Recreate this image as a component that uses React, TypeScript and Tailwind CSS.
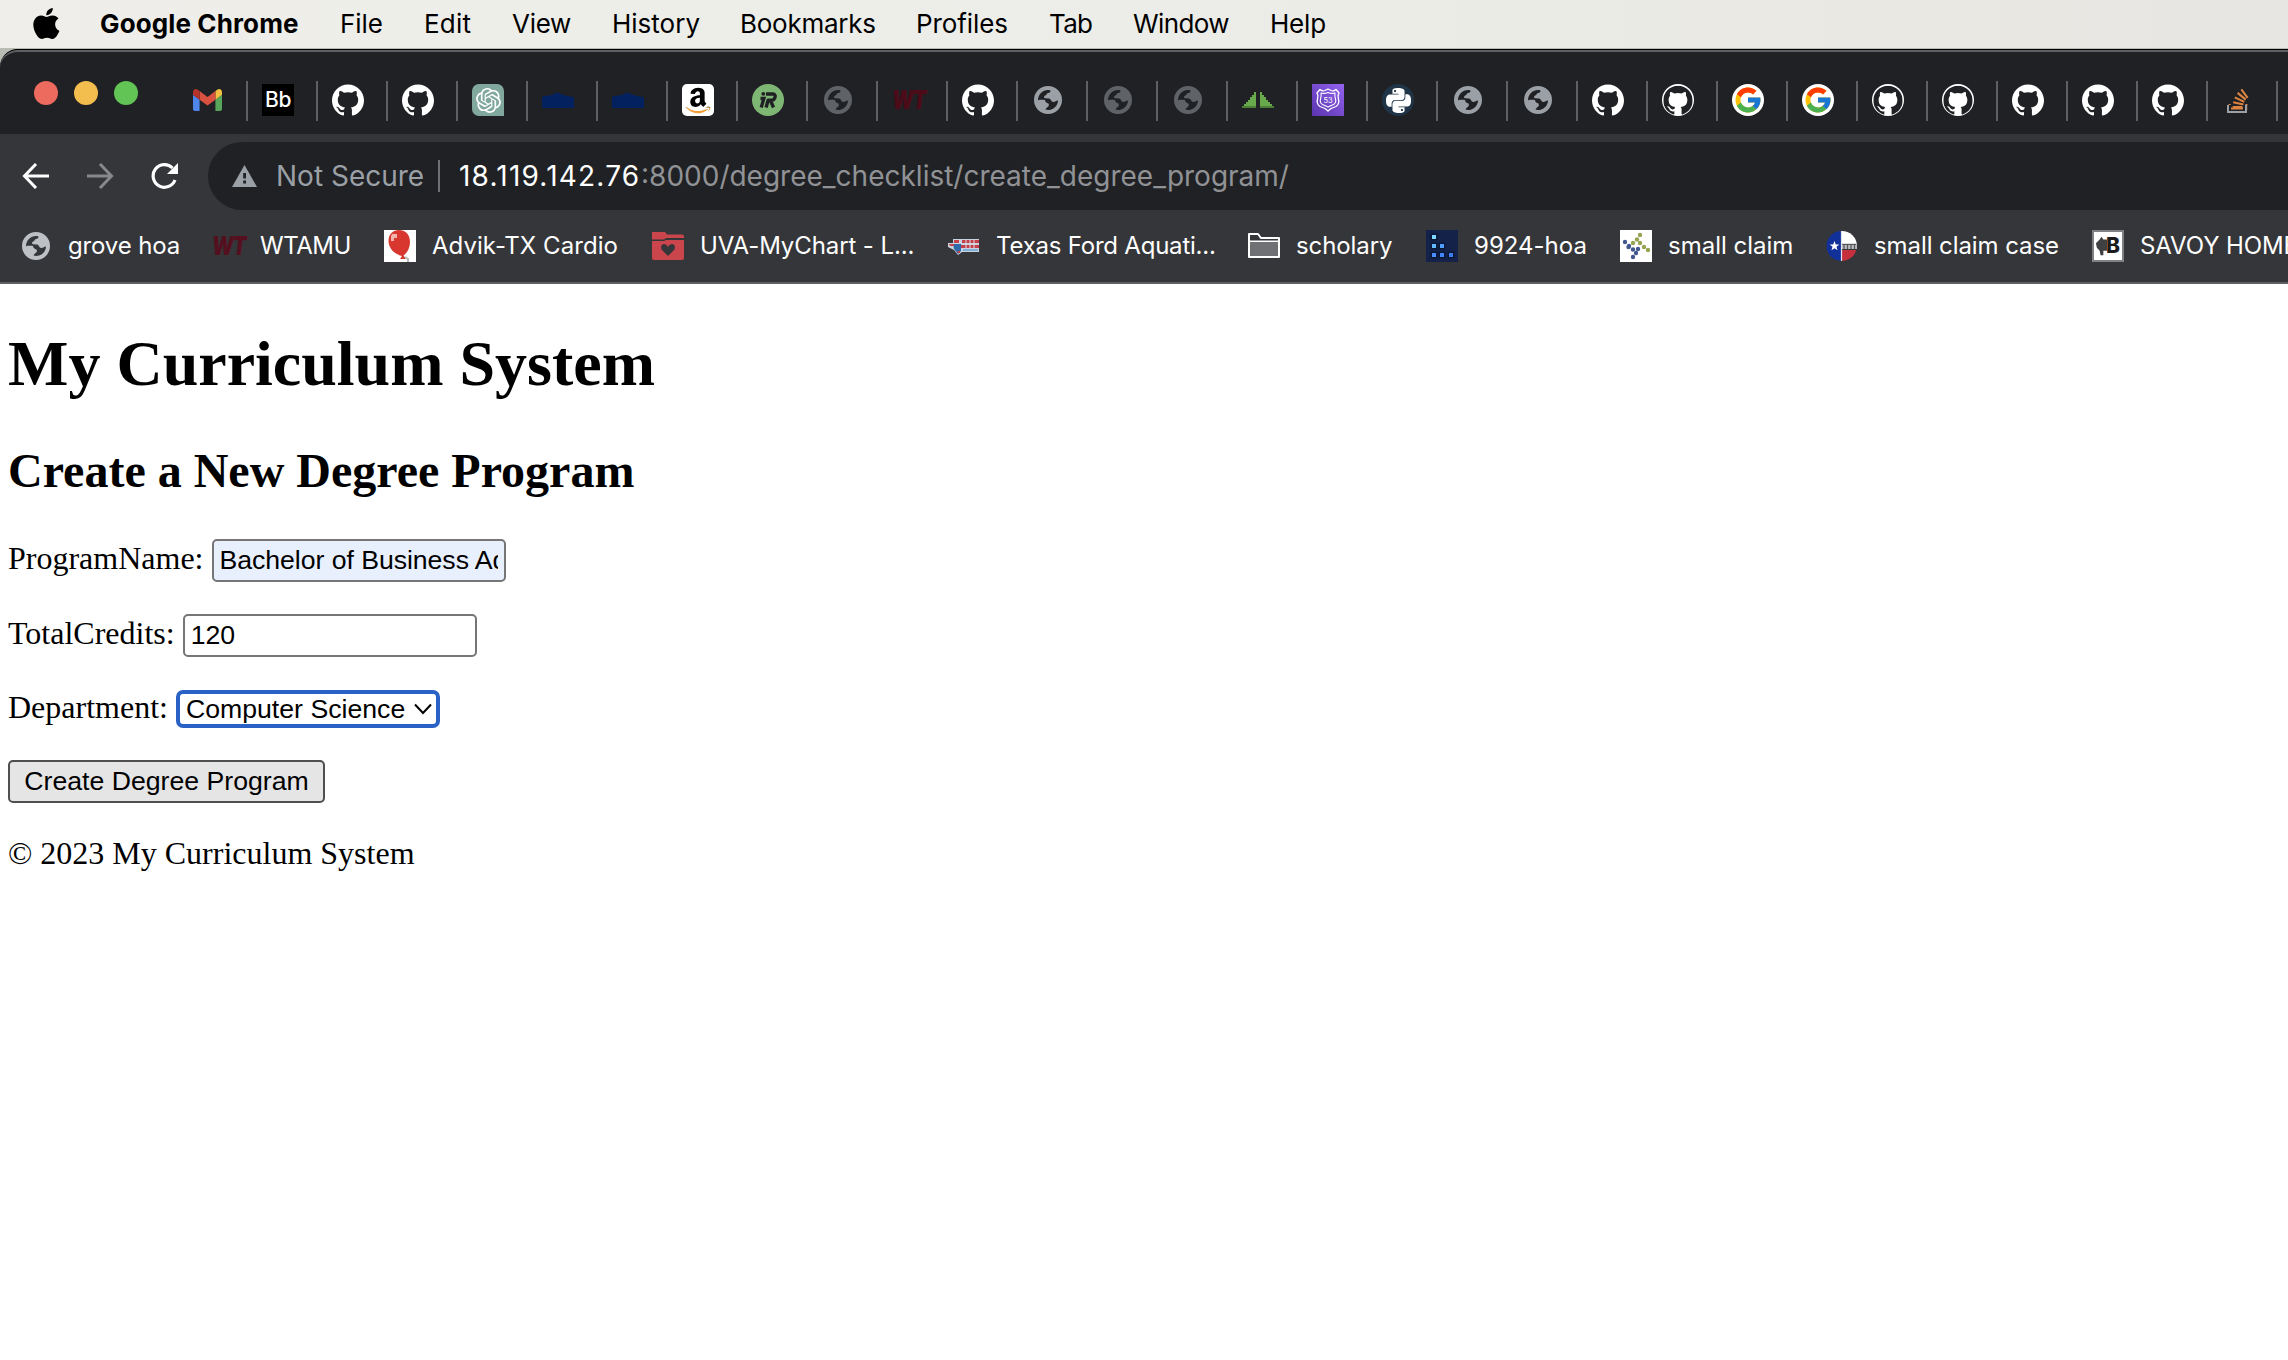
import type { ReactNode } from "react";
import { FaAmazon, FaStackOverflow } from "react-icons/fa";
import { FcGoogle } from "react-icons/fc";
import { SiApple, SiGithub, SiOpenai, SiPython } from "react-icons/si";

function Globe({ tone }: { tone: string }) {
  return (
    <svg viewBox="0 0 28 28" className={"h-7 w-7 " + tone}>
      <path
        fill="currentColor"
        fillRule="evenodd"
        d="M14 0a14 14 0 1 1 0 28a14 14 0 0 1 0-28ZM4 14.5C4.3 13.8 6 13.6 7.5 13.8C10 14 11 13.4 11.3 15C11.6 17.4 15 16.4 14.9 19C14.8 21 12 21.4 11.6 23.6C12.4 23.9 13.2 24 14 24C19.4 24 23.8 19.8 24 14.4C22.4 14.2 21.4 15.8 19.4 15.9C16.8 16 17.4 12.6 15 12.4L11 12.2C9.6 12 9.8 9.8 11.2 9.4C13 9 12.2 7.4 14 7C15.8 6.6 16.8 6 16.4 4.4C15.6 4.1 14.8 4 14 4C8.5 4 4 8.6 4 14.5Z"
      />
    </svg>
  );
}

function Gmail() {
  return (
    <svg viewBox="52 42 88 66" className="h-[22px] w-[29px]">
      <path fill="#4f86ec" d="M58 108h14V74L52 59v43c0 3.32 2.69 6 6 6" />
      <path fill="#58a55c" d="M120 108h14c3.32 0 6-2.69 6-6V59l-20 15" />
      <path fill="#f2bf42" d="M120 48v26l20-15v-8c0-7.42-8.47-11.65-14.4-7.2" />
      <path fill="#d95140" d="M72 74V48l24 18 24-18v26L96 92" />
      <path fill="#b5332a" d="M52 51v8l20 15V48l-5.6-4.2c-5.94-4.45-14.4-.22-14.4 7.2" />
    </svg>
  );
}

function GithubInverted() {
  return (
    <svg viewBox="0 0 32 32" className="h-8 w-8">
      <circle cx="16" cy="16" r="16" fill="#fff" />
      <g transform="translate(1.3 1.5) scale(1.225)">
        <SiGithub size={24} color="#202124" />
      </g>
    </svg>
  );
}

function Wt({ tone }: { tone: string }) {
  return (
    <span className="flex h-8 w-8 items-center justify-center">
      <span className={"scale-x-[0.78] font-['Inter'] text-[26px] leading-none font-black tracking-[-1.5px] italic " + tone}>WT</span>
    </span>
  );
}

function Amazon() {
  return (
    <span className="relative block h-8 w-8 rounded-[5px] bg-white">
      <FaAmazon className="absolute top-[2px] left-[2px] h-[29px] w-[28px] text-black [clip-path:inset(0_0_26%_0)]" />
      <FaAmazon className="absolute top-[2px] left-[2px] h-[29px] w-[28px] text-[#f19e38] [clip-path:inset(74%_0_0_0)]" />
    </span>
  );
}

function Cap() {
  return (
    <svg viewBox="0 0 32 32" className="h-8 w-8">
      <path fill="#03205f" d="M0 24V13.500Q0 12.500 1.500 12.300L10 11Q15 7 20 10.500L26 12.300L31 13Q32 13.300 32 14.500V24Z" />
    </svg>
  );
}

function Sails() {
  return (
    <svg viewBox="0 0 32 32" className="h-8 w-8">
      <path fill="#68a94b" d="M14 8V24H0V22L2 22V20H4V18H6V16H8V13H10V11H12V8ZM18 8H20V11H22V13H24V16H26V18H28V20H30V22H32V24H18Z" />
      <path fill="#4c8037" d="M0 22h14v2H0zM18 22h14v2H18z" />
    </svg>
  );
}

function Shield() {
  return (
    <span className="flex h-8 w-8 items-center justify-center bg-linear-to-bl from-[#9563f0] to-[#5a34ae]">
      <svg viewBox="0 0 32 32" className="h-8 w-8" fill="none" stroke="#fff" strokeLinejoin="round">
        <path strokeWidth="1.3" d="M8 5.5Q10 7.5 13 6.5L16 5L19 6.5Q22 7.5 24 5.5L27 9Q25.5 11 26.3 14Q28 20 24 22.5L19 24.5L16 27L13 24.5L8 22.5Q4 20 5.7 14Q6.5 11 5 9Z" />
        <path strokeWidth="1.1" d="M9 9Q12 10 16 8.5Q20 10 23 9Q22.5 12 23.5 15Q24.5 19 21.5 20.5L16 23L10.5 20.5Q7.5 19 8.5 15Q9.5 12 9 9Z" />
        <text x="16" y="18.7" textAnchor="middle" fill="#fff" stroke="none" fontSize="7.5" fontFamily="Inter">53</text>
      </svg>
    </span>
  );
}

function Roomba() {
  return (
    <span className="flex h-8 w-8 items-center justify-center rounded-full bg-[#7eb673]">
      <svg viewBox="0 0 32 32" className="h-8 w-8" fill="none" stroke="#202124">
        <circle cx="11.3" cy="9.8" r="1.9" fill="#202124" stroke="none" />
        <path strokeWidth="3.3" d="M8.5 14.5h3.400l-2.700 9" />
        <path strokeWidth="3.4" strokeLinejoin="round" d="M14 10h6.500q3.200 0 2.600 3q-.6 3.300-4 3.300h-3l-2 7.200M18.500 16.500l3 7" />
      </svg>
    </span>
  );
}

function Google() {
  return (
    <span className="flex h-8 w-8 items-center justify-center rounded-full bg-white">
      <FcGoogle className="h-[30px] w-[30px]" />
    </span>
  );
}

function StackOverflow() {
  return (
    <span className="relative block h-8 w-8">
      <FaStackOverflow className="absolute top-[3px] left-[4px] h-[27px] w-[25px] text-[#de8442] [clip-path:inset(0_0_15%_0)]" />
      <svg viewBox="0 0 32 32" className="absolute inset-0 h-8 w-8">
        <path fill="none" stroke="#202124" strokeWidth="5" d="M7 21V28H23V21" />
        <path fill="none" stroke="#9c9fa3" strokeWidth="2" d="M6 21V28H24V21" />
        <path stroke="#de8442" strokeWidth="2.2" d="M9 24.500H21" />
      </svg>
    </span>
  );
}

const github = <SiGithub className="h-8 w-8 text-white" />;
const bright = <Globe tone="text-[#9aa0a6]" />;
const dim = <Globe tone="text-[#5f6368]" />;

const tabs: ReactNode[] = [
  <span className="flex h-8 w-8 items-center justify-center bg-black font-['Inter'] text-[21px] font-medium tracking-[-0.5px] text-white">Bb</span>,
  github,
  github,
  <span className="flex h-8 w-8 items-center justify-center rounded-tl-[7px] rounded-tr-[7px] rounded-bl-[7px] bg-[#80a89d]">
    <SiOpenai className="h-[25px] w-[25px] text-white" />
  </span>,
  <Cap />,
  <Cap />,
  <Amazon />,
  <Roomba />,
  dim,
  <Wt tone="text-[#4d0a18]" />,
  github,
  bright,
  dim,
  dim,
  <Sails />,
  <Shield />,
  <span className="flex h-8 w-8 items-center justify-center rounded-full bg-[#1f3447]">
    <SiPython className="h-[25px] w-[25px] text-white" />
  </span>,
  bright,
  bright,
  github,
  <GithubInverted />,
  <Google />,
  <Google />,
  <GithubInverted />,
  <GithubInverted />,
  github,
  github,
  github,
  <StackOverflow />,
];

function Balloon() {
  return (
    <svg viewBox="0 0 32 32" className="h-8 w-8 bg-white">
      <path fill="#d8372f" d="M15 0C21 0 26 4 26 12C26 19 22 24 19.500 25.500L22 29H16L18 26C10 24 4.500 18 4.500 11C4.500 4 9 0 15 0Z" />
      <path fill="#f3b4af" d="M8 4h5v4h-3v3H7V6z" />
      <path fill="none" stroke="#b9b9b9" strokeWidth="2" d="M21 27l3 2v3" />
    </svg>
  );
}

function HeartFolder() {
  return (
    <svg viewBox="0 0 32 32" className="h-8 w-8">
      <path fill="#cb464c" d="M0 2h13l2 2.500h15q2 0 2 2V8H14l-2 1.500H0zM0 11h12l2-1h18v18q0 2-2 2H2q-2 0-2-2z" />
      <path fill="#35363a" d="M16 26l-6.500-6.500Q8 15 11.500 14Q14.500 14 16 17Q17.500 14 20.500 14Q24 15 22.500 19.500z" />
    </svg>
  );
}

function Texas() {
  return (
    <svg viewBox="0 0 32 32" className="h-8 w-8">
      <path fill="#c9d3df" d="M0 13h5V9h26v13H14l-4 3l-4-5L0 17z" />
      <path fill="#2f6aa8" d="M5 14h8v7l-3 3l-4-5z" />
      <path fill="#c4404a" d="M1 14h5v2H2zM6 10h5v3H6zM14 10h17v3H14zM13 15h18v3H13zM9 21h3v2H10z" />
      <path fill="#7fb0d8" d="M15 19h15v2H15z" />
      <path stroke="#e6dfe4" strokeWidth="1" d="M18 10v8M22 10v8M26 10v8" />
    </svg>
  );
}

function Folder() {
  return (
    <svg viewBox="0 0 32 32" className="h-8 w-8">
      <path fill="#707174" stroke="#fff" strokeWidth="2" strokeLinejoin="round" d="M1 27V4H10L13 8H31V27Z" />
      <path fill="#35363a" d="M2 5H9.500L12 9H30V11H2z" />
      <path fill="#fff" d="M1 10.500h30v1.500H1z" />
    </svg>
  );
}

function Dots() {
  const cells = [[8, 7], [8, 16], [16, 16], [8, 25], [16, 25], [25, 25]];
  return (
    <svg viewBox="0 0 32 32" className="h-8 w-8 bg-[#14224a]">
      {cells.map(([x, y], i) => (
        <g key={i}>
          <rect x={x - 3.5} y={y - 3.5} width="7" height="7" fill="#0a1838" />
          <rect x={x - 2} y={y - 2} width="4" height="4" fill={["#7fd8ff", "#62b8ff", "#4f9dff", "#4a8dff", "#3f86ff", "#3c7df5"][i]} />
        </g>
      ))}
    </svg>
  );
}

function Beads() {
  const green = [[20, 5], [17, 9.5], [13, 13], [20, 13], [24, 17], [28, 20]];
  const blue = [[5, 12], [9, 16], [13, 19.5], [18, 19], [16, 23], [13, 27], [8.5, 17]];
  return (
    <svg viewBox="0 0 32 32" className="h-8 w-8 bg-white">
      {green.map(([x, y], i) => <circle key={i} cx={x} cy={y} r="2.2" fill="#95a352" />)}
      {blue.map(([x, y], i) => <circle key={i} cx={x} cy={y} r="2.2" fill="#43578f" />)}
    </svg>
  );
}

function TexasSeal() {
  return (
    <svg viewBox="0 0 32 32" className="h-8 w-8">
      <path fill="#12309a" d="M15.500 1A15 15 0 0 0 15.500 31z" />
      <path fill="#fff" d="M15.500 1A15 15 0 0 1 31 16H15.500z" />
      <path fill="#c5303c" d="M15.500 20H30.300A15 15 0 0 1 15.500 31z" />
      <path fill="#b9babd" d="M15.500 13.500H31V19H15.500z" />
      <path stroke="#54565a" strokeWidth="1.2" d="M16 14.500h14M18 14v5M21.500 14v5M25 14v5M28.500 14v5" />
      <path fill="#fff" d="M8.500 11l1.300 3.500h3.500l-2.800 2.200l1 3.600l-3-2.100l-3 2.100l1-3.600l-2.800-2.200h3.500z" />
      <path stroke="#dfe3ee" strokeWidth="1.2" d="M15.500 1v30" />
    </svg>
  );
}

function Savoy() {
  return (
    <span className="relative flex h-8 w-8 items-center justify-end border-2 border-[#808184] bg-white pr-[2px] font-['Inter'] text-[21px] font-extrabold text-[#1b1b1b]">
      <svg viewBox="0 0 14 22" className="absolute top-[3px] left-[1px] h-[22px] w-[13px]">
        <path fill="#3f4042" d="M7 1l2 3h4v12H9v5H6l-1-5l-3-3l-1-5l4-4z" />
      </svg>
      B
    </span>
  );
}

const bookmarks: { icon: ReactNode; label: string; cell: string; text: string }[] = [
  { icon: <Globe tone="text-[#bdc1c6]" />, label: "grove hoa", cell: "w-[192px]", text: "tracking-[-0.15px]" },
  { icon: <Wt tone="text-[#55101f]" />, label: "WTAMU", cell: "w-[172px]", text: "tracking-[-0.45px]" },
  { icon: <Balloon />, label: "Advik-TX Cardio", cell: "w-[268px]", text: "tracking-[0.05px]" },
  { icon: <HeartFolder />, label: "UVA-MyChart - L...", cell: "w-[296px]", text: "tracking-[-0.1px]" },
  { icon: <Texas />, label: "Texas Ford Aquati...", cell: "w-[300px]", text: "tracking-[-0.22px]" },
  { icon: <Folder />, label: "scholary", cell: "w-[178px]", text: "tracking-[-0.1px]" },
  { icon: <Dots />, label: "9924-hoa", cell: "w-[194px]", text: "tracking-[0px]" },
  { icon: <Beads />, label: "small claim", cell: "w-[206px]", text: "tracking-[0px]" },
  { icon: <TexasSeal />, label: "small claim case", cell: "w-[266px]", text: "tracking-[-0.08px]" },
  { icon: <Savoy />, label: "SAVOY HOME", cell: "w-[260px]", text: "tracking-[-0.1px]" },
];

const menus: [string, string][] = [
  ["Google Chrome", "w-[240px] font-bold tracking-[0.12px]"],
  ["File", "w-[84px] tracking-[-0.1px]"],
  ["Edit", "w-[88px] tracking-[0.2px]"],
  ["View", "w-[100px] tracking-[-0.3px]"],
  ["History", "w-[128px]"],
  ["Bookmarks", "w-[176px] tracking-[-0.25px]"],
  ["Profiles", "w-[133px] tracking-[-0.1px]"],
  ["Tab", "w-[84px] tracking-[-0.7px]"],
  ["Window", "w-[137px] tracking-[-0.6px]"],
  ["Help", "tracking-[-0.2px]"],
];

export default function App() {
  return (
    <div className="flex h-[1360px] w-[2288px] flex-col overflow-hidden bg-white">
      <div className="flex h-12 shrink-0 items-center bg-linear-to-r from-[#efeeea] via-[#ecede8] to-[#e8e6e2] pb-[2px] pl-[33px] font-['Inter',sans-serif] text-[26px] whitespace-nowrap text-black">
        <SiApple className="mr-10 h-[31px] w-[27px]" preserveAspectRatio="none" viewBox="2 0 20.200 24" />
        {menus.map(([label, cls]) => (
          <span key={label} className={"shrink-0 " + cls}>
            {label}
          </span>
        ))}
      </div>

      <div className="shrink-0 bg-[#b9bbb5] pt-px font-['Inter',sans-serif]">
        <div className="overflow-hidden rounded-tl-[18px] border-t border-black bg-[#202124]">
          <div className="flex h-[84px] items-start rounded-tl-[18px] border-t-2 border-[#5f6064]">
            <div className="mt-[29px] ml-[34px] flex w-[159px] shrink-0 gap-4">
              <span className="h-6 w-6 rounded-full bg-[#ec6a5e]" />
              <span className="h-6 w-6 rounded-full bg-[#f4be4f]" />
              <span className="h-6 w-6 rounded-full bg-[#61c454]" />
            </div>
            <div className="mt-[37px] w-[53px] shrink-0">
              <Gmail />
            </div>
            {tabs.map((icon, i) => (
              <div key={i} className="mt-[29px] flex h-10 w-[70px] shrink-0 items-center border-l-2 border-[#5f6064] pb-[2px] pl-[14px]">
                <div className="flex h-8 w-8 items-center justify-center">{icon}</div>
              </div>
            ))}
            <div className="mt-[29px] h-10 w-[2px] shrink-0 bg-[#5f6064]" />
          </div>
        </div>

        <div className="bg-[#35363a]">
          <div className="flex h-[76px] items-end">
            <div className="flex h-[68px] w-[208px] shrink-0 items-center pl-[22px]">
              <svg viewBox="0 0 28 26" className="h-[26px] w-7 shrink-0" fill="none" stroke="#fff" strokeWidth="3">
                <path d="M27 13H3M14 1L2.500 13L14 25" />
              </svg>
              <svg viewBox="0 0 28 26" className="ml-9 h-[26px] w-7 shrink-0" fill="none" stroke="#87888b" strokeWidth="3">
                <path d="M1 13H25M14 1L25.500 13L14 25" />
              </svg>
              <svg viewBox="0 0 28 26" className="ml-9 h-[26px] w-7 shrink-0" fill="none" stroke="#fff" strokeWidth="3.2">
                <path d="M22.500 5A11.300 11.300 0 1 0 25 17" />
                <path fill="#fff" stroke="none" d="M28 0V11H17z" />
              </svg>
            </div>
            <div className="flex h-[68px] flex-1 items-center rounded-l-full bg-[#202124] pl-[24px] text-[28px] whitespace-nowrap">
              <svg viewBox="0 0 25 22" className="h-[22px] w-[25px]">
                <path fill="#9aa0a6" d="M12.500 0L25 22H0z" />
                <path fill="#202124" d="M11.200 8h2.800v5.500h-2.800zM11.200 15.500h2.800v3h-2.800z" />
              </svg>
              <span className="ml-[19px] w-[162px] text-[#9aa0a6]">Not Secure</span>
              <span className="h-8 w-[2px] bg-[#6d7074]" />
              <span className="ml-[19px] w-[182px] tracking-[1.2px] text-white">18.119.142.76</span>
              <span className="text-[#909296]">:8000/degree_checklist/create_degree_program/</span>
            </div>
          </div>
          <div className="flex h-[74px] items-start border-b-2 border-[#5f6064] pt-5 pl-5 text-[24px] whitespace-nowrap text-white">
            {bookmarks.map(({ icon, label, cell, text }) => (
              <div key={label} className={"flex h-8 shrink-0 items-center " + cell}>
                <div className="flex h-8 w-8 shrink-0 items-center justify-center">{icon}</div>
                <span className={"ml-4 " + text}>{label}</span>
              </div>
            ))}
          </div>
        </div>
      </div>

      <main className="flex flex-col items-start pl-2 font-['Liberation_Serif',serif] text-[32px] leading-10 text-black">
        <h1 className="mt-[44px] text-[64px] leading-[72px] font-bold">My Curriculum System</h1>
        <h2 className="mt-[43px] text-[48px] leading-[56px] font-bold">Create a New Degree Program</h2>
        <div className="mt-10 flex h-[43px] items-center gap-2">
          <label className="pb-[5px]">ProgramName:</label>
          <div className="h-[43px] w-[294px] rounded-[5px] border-2 border-[#767676] bg-[#e9f0fd] px-[6px]">
            <div className="overflow-hidden font-['Liberation_Sans',sans-serif] text-[26.67px] leading-[38px] tracking-[-0.05px] whitespace-nowrap">
              Bachelor of Business Administration
            </div>
          </div>
        </div>
        <div className="mt-8 flex h-[43px] items-center gap-2">
          <label className="pb-[5px]">TotalCredits:</label>
          <div className="h-[43px] w-[294px] rounded-[5px] border-2 border-[#767676] bg-white px-[6px] font-['Liberation_Sans',sans-serif] text-[26.67px] leading-[38px]">
            120
          </div>
        </div>
        <div className="mt-[33px] flex h-[38px] items-center gap-2">
          <label className="pb-[4px]">Department:</label>
          <div className="flex h-[38px] w-[264px] items-center rounded-[7px] border-4 border-[#2961c4] bg-white pb-px pl-[6px] font-['Liberation_Sans',sans-serif] text-[26.67px] leading-[30px] whitespace-nowrap">
            Computer Science
            <svg viewBox="0 0 18 12" className="ml-[9px] h-3 w-[18px] shrink-0" fill="none" stroke="#000" strokeWidth="2">
              <path d="M1 1.500L9 10L17 1.500" />
            </svg>
          </div>
        </div>
        <button className="mt-8 h-[43px] w-[317px] rounded-[5px] border-2 border-[#4f4f4f] bg-[#e5e5e5] pb-px font-['Liberation_Sans',sans-serif] text-[26.67px] leading-[38px]">
          Create Degree Program
        </button>
        <footer className="mt-[30px]">© 2023 My Curriculum System</footer>
      </main>
    </div>
  );
}
